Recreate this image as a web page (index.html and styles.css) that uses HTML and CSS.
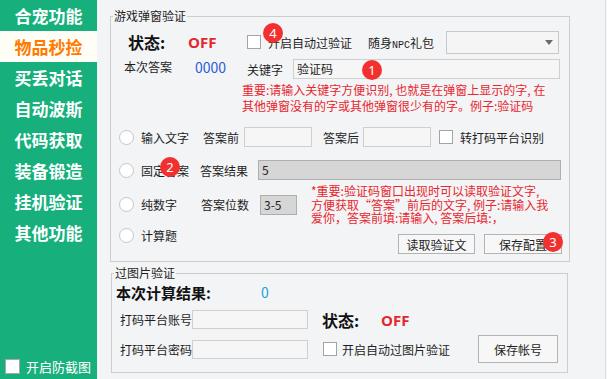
FILE: index.html
```html
<!DOCTYPE html>
<html lang="zh-CN">
<head>
<meta charset="utf-8">
<title>物品秒捡</title>
<link rel="stylesheet" href="styles.css">
</head>
<body>
<div class="app">
  <nav class="sidebar">
    <div class="nav-item">合宠功能</div>
    <div class="nav-item active">物品秒捡</div>
    <div class="nav-item">买丢对话</div>
    <div class="nav-item">自动波斯</div>
    <div class="nav-item">代码获取</div>
    <div class="nav-item">装备锻造</div>
    <div class="nav-item">挂机验证</div>
    <div class="nav-item">其他功能</div>
    <div class="side-footer"><span class="side-check"></span><span>开启防截图</span></div>
  </nav>
  <main class="main">
    <fieldset class="group g1">
      <legend>游戏弹窗验证</legend>
      <div class="row ra">
        <span class="status w-status">状态:</span>
        <span class="off w-off">OFF</span>
        <span class="check ck1"></span>
        <span class="w-auto">开启自动过验证</span>
        <span class="w-npc">随身<span class="mono">NPC</span>礼包</span>
        <span class="combo"><span class="arrow"></span></span>
      </div>
      <div class="row rb">
        <span class="top-text w-ans">本次答案</span>
        <span class="top-text code w-code">0000</span>
        <span class="w-key">关键字</span>
        <span class="field w-keyfield">验证码</span>
      </div>
      <p class="warn warn1">重要:请输入关键字方便识别, 也就是在弹窗上显示的字, 在<br>其他弹窗没有的字或其他弹窗很少有的字。例子:验证码</p>
      <div class="row rr1">
        <span class="radio"></span>
        <span class="w-r1">输入文字</span>
        <span class="w-pre">答案前</span>
        <span class="field w-sm"></span>
        <span class="w-post">答案后</span>
        <span class="field w-sm"></span>
        <span class="check ck2"></span>
        <span>转打码平台识别</span>
      </div>
      <div class="row rr2">
        <span class="radio"></span>
        <span class="w-r2">固定答案</span>
        <span class="w-res">答案结果</span>
        <span class="field gray w-resfield">5</span>
      </div>
      <div class="row rr3">
        <span class="radio"></span>
        <span class="w-r3">纯数字</span>
        <span class="w-digits">答案位数</span>
        <span class="field gray w-digitfield">3-5</span>
        <p class="warn warn2">*重要:验证码窗口出现时可以读取验证文字,<br>方便获取“答案”前后的文字, 例子:请输入我<br>爱你，答案前填:请输入, 答案后填:，</p>
      </div>
      <div class="row rr4">
        <span class="radio"></span>
        <span class="w-r4">计算题</span>
        <span class="buttons">
          <button class="btn btn1" type="button">读取验证文</button>
          <button class="btn btn2" type="button">保存配置</button>
        </span>
      </div>
    </fieldset>

    <fieldset class="group g2">
      <legend>过图片验证</legend>
      <div class="row r21">
        <span class="result-label">本次计算结果:</span>
        <span class="result-val">0</span>
      </div>
      <div class="row r22">
        <span class="w-acct">打码平台账号</span>
        <span class="field w-acctfield"></span>
        <span class="status w-status2">状态:</span>
        <span class="off">OFF</span>
      </div>
      <div class="row r23">
        <span class="w-acct">打码平台密码</span>
        <span class="field w-acctfield"></span>
        <span class="check ck3"></span>
        <span>开启自动过图片验证</span>
        <button class="btn btn3" type="button">保存帐号</button>
      </div>
    </fieldset>
  </main>

  <span class="badge b4">4</span>
  <span class="badge b1">1</span>
  <span class="badge b2">2</span>
  <span class="badge b3">3</span>
</div>
</body>
</html>
```

FILE: styles.css
```css
* { box-sizing: border-box; }
html, body { margin: 0; padding: 0; }
body {
  width: 607px;
  height: 379px;
  overflow: hidden;
  font-family: "Noto Sans CJK SC", sans-serif;
  font-size: 12px;
  color: #1e1e1e;
  background: #f8f8f8;
}
.app {
  position: relative;
  display: flex;
  width: 607px;
  height: 379px;
}

/* sidebar */
.sidebar {
  width: 97px;
  flex: none;
  background: #17b07d;
  display: flex;
  flex-direction: column;
  padding-bottom: 5px;
}
.nav-item {
  height: 31px;
  line-height: 31px;
  text-align: center;
  color: #fff;
  font-size: 17px;
  font-weight: 700;
}
.nav-item.active {
  background: #fefdf6;
  color: #ff7a00;
}
.side-footer {
  margin-top: auto;
  display: flex;
  align-items: center;
  height: 15px;
  padding-left: 5px;
  gap: 6px;
  color: #fff;
  font-size: 13px;
}
.side-check {
  width: 15px;
  height: 15px;
  background: #fff;
  border: 1px solid #a8a8a8;
}

/* main */
.main {
  width: 509px;
  flex: none;
  background: #f3f4f6;
  border-right: 1px solid #dcdcdc;
  padding: 9px 0 0 13px;
}
.group {
  margin: 0;
  padding: 0;
  border: 1px solid #cdcdcd;
  min-width: 0;
}
.group legend {
  font-size: 12px;
  line-height: 14px;
  padding: 0 1px;
  margin-left: 2px;
}
.g1 { width: 460px; padding-bottom: 7px; }
.g2 { width: 457px; margin: 4px 0 0 1px; padding-bottom: 9px; }

.row {
  display: flex;
  align-items: center;
  white-space: nowrap;
}
.row > span { flex: none; }

.status { font-size: 16px; font-weight: 700; color: #111; }
.off {
  font-family: "Open Sans", sans-serif;
  font-weight: 700;
  font-size: 15px;
  color: #e5262d;
}
.check {
  width: 14px;
  height: 14px;
  background: #fff;
  border: 1px solid #a4a4a4;
}
.field {
  height: 20px;
  border: 1px solid #cfcfcf;
  background: #f6f6f6;
  padding-left: 3px;
  line-height: 18px;
}
.field.gray {
  background: #d6d6d6;
  border-color: #aeaeae;
}
.radio {
  width: 15px;
  height: 15px;
  border-radius: 50%;
  background: #fff;
  border: 1px solid #c6c6c6;
  margin-left: 8px;
  margin-right: 7px;
}
.warn {
  margin: 0;
  color: #e8262d;
  white-space: nowrap;
}
.btn {
  height: 20px;
  padding: 0;
  font-family: "Noto Sans CJK SC", sans-serif;
  font-size: 12px;
  color: #1e1e1e;
  background: #f7f7f7;
  border: 1px solid #b3b3b3;
  border-radius: 0;
}

/* row A */
.ra { height: 24px; margin-top: 7px; }
.w-status { margin-left: 17px; width: 60px; }
.w-off { width: 59px; }
.ck1 { margin-right: 7px; }
.w-auto { width: 100px; }
.w-npc { width: 78px; }
.mono { font-family: "Liberation Mono", monospace; font-size: 10px; }
.combo {
  width: 113px;
  height: 23px;
  border: 1px solid #c8c8c8;
  background: #f5f5f5;
  display: flex;
  align-items: center;
  justify-content: flex-end;
  padding-right: 5px;
}
.arrow {
  width: 0;
  height: 0;
  border-left: 4px solid transparent;
  border-right: 4px solid transparent;
  border-top: 5px solid #6b6b6b;
}

/* row B */
.rb { height: 20px; margin-top: 5px; }
.top-text { align-self: flex-start; line-height: 16px; }
.w-ans { margin-left: 13px; width: 71px; }
.code { font-size: 14px; color: #2b5cd8; width: 52px; }
.w-key { width: 46px; }
.w-keyfield { width: 267px; }

.warn1 { margin: 3px 0 0 131px; line-height: 16px; }

/* radio rows */
.rr1 { height: 20px; margin-top: 13px; }
.w-r1 { width: 62px; }
.w-pre { width: 41px; }
.w-sm { width: 68px; }
.w-post { margin-left: 11px; width: 40px; }
.ck2 { margin-left: 8px; margin-right: 7px; }

.rr2 { height: 20px; margin-top: 13px; }
.w-r2 { width: 59px; }
.w-res { width: 58px; }
.w-resfield { width: 303px; }

.rr3 { height: 41px; margin-top: 4px; }
.w-r3 { width: 60px; }
.w-digits { width: 59px; }
.w-digitfield { width: 37px; }
.warn2 { margin-left: 14px; line-height: 13.5px; }

.rr4 { height: 26px; margin-top: 3px; align-items: flex-start; }
.w-r4 { line-height: 15px; }
.buttons {
  margin-left: auto;
  margin-right: 7px;
  margin-top: 6px;
  display: flex;
  gap: 9px;
}
.btn1 { width: 77px; }
.btn2 { width: 78px; }

/* group 2 */
.r21 { height: 18px; margin-top: 3px; }
.result-label { margin-left: 4px; width: 145px; font-size: 15px; font-weight: 700; color: #111; }
.result-val { font-size: 14px; color: #1ba3d2; }
.r22 { height: 19px; margin-top: 9px; }
.w-acct { margin-left: 8px; width: 72px; }
.w-acctfield { width: 116px; height: 19px; }
.w-status2 { margin-left: 14px; width: 59px; }
.r23 { height: 28px; margin-top: 6px; }
.ck3 { margin-left: 15px; margin-right: 5px; }
.btn3 { margin-left: auto; margin-right: 9px; width: 80px; height: 28px; }

/* badges */
.badge {
  position: absolute;
  width: 20px;
  height: 20px;
  border-radius: 50%;
  background: #f2302f;
  color: #fff;
  font-family: "Noto Sans", sans-serif;
  font-size: 13px;
  line-height: 20px;
  text-align: center;
}
.b4 { left: 263px; top: 23px; }
.b1 { left: 362px; top: 60px; }
.b2 { left: 160px; top: 157px; }
.b3 { left: 543px; top: 232px; }
```
